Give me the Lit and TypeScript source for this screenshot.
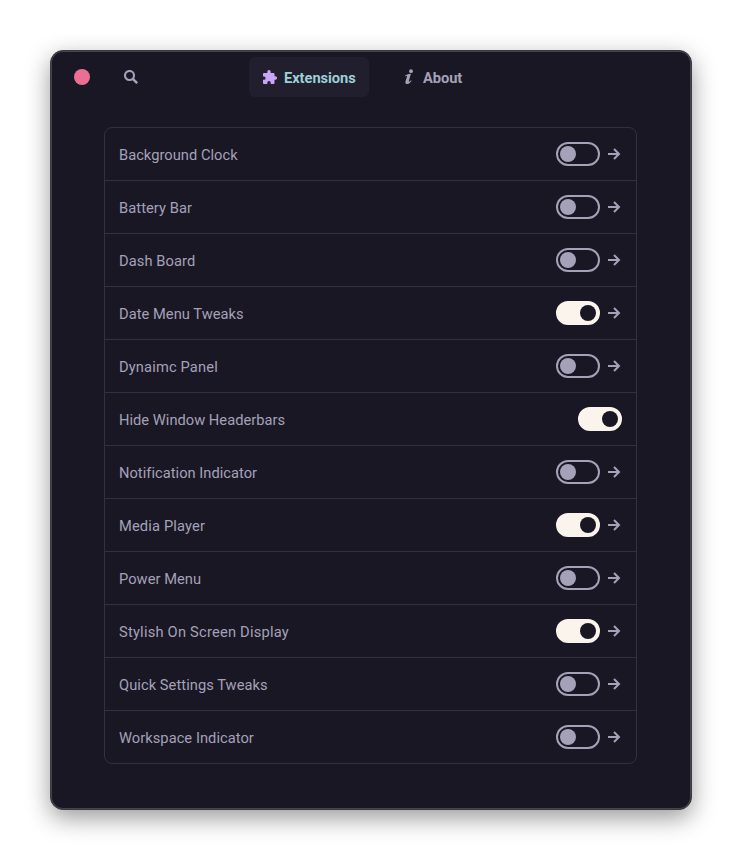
import { LitElement, html, css, svg } from "lit";
import { customElement, property } from "lit/decorators.js";
import { classMap } from "lit/directives/class-map.js";
import { styleMap } from "lit/directives/style-map.js";

interface Extension {
  name: string;
  tracking: number;
  enabled?: boolean;
  noPrefs?: boolean;
}

const EXTENSIONS: Extension[] = [
  { name: "Background Clock", tracking: 0.03 },
  { name: "Battery Bar", tracking: 0.08 },
  { name: "Dash Board", tracking: 0.08 },
  { name: "Date Menu Tweaks", tracking: 0.04, enabled: true },
  { name: "Dynaimc Panel", tracking: 0.15 },
  { name: "Hide Window Headerbars", tracking: 0.02, enabled: true, noPrefs: true },
  { name: "Notification Indicator", tracking: 0.03 },
  { name: "Media Player", tracking: 0.15, enabled: true },
  { name: "Power Menu", tracking: 0.05 },
  { name: "Stylish On Screen Display", tracking: 0.22, enabled: true },
  { name: "Quick Settings Tweaks", tracking: 0.06 },
  { name: "Workspace Indicator", tracking: 0.05 },
];

const icons = {
  search: svg`<circle cx="5.5" cy="5.5" r="4.5" fill="none" stroke="currentColor" stroke-width="2.1"/><path d="M8.8 8.8 13.2 13.2" stroke="currentColor" stroke-width="2.5"/>`,
  puzzle: svg`<path fill="currentColor" d="M5.3 4V2.7a1.7 1.7 0 0 1 3.4 0V4H11.500a1 1 0 0 1 1 1v2.300h.9a1.700 1.700 0 0 1 0 3.400h-.9V14a1 1 0 0 1-1 1H8.700v-1.200a1.700 1.700 0 0 0-3.400 0V15H2a1 1 0 0 1-1-1v-3.200h1a1.600 1.600 0 0 0 0-3.200H1V5a1 1 0 0 1 1-1z"/>`,
  info: svg`<g fill="currentColor"><circle cx="7" cy="2.200" r="1.900"/><path d="M1 7.100C2.200 5.600 3.900 4.900 6.900 4.800L4.900 11.700c-.2.8.1 1.100.5.9.6-.2 1-.7 1.500-1.400l.7.400c-1.100 2.100-2.500 3.500-4.400 3.500-1.600 0-2.200-1.100-1.700-2.600L3 7.500c.2-.6 0-.8-.4-.7-.4.1-.6.4-1 .8z"/></g>`,
  arrow: svg`<path d="M0 6h11M6 1l5 5-5 5" fill="none" stroke="currentColor" stroke-width="2"/>`,
};

@customElement("toggle-switch")
export class ToggleSwitch extends LitElement {
  @property({ type: Boolean }) on = false;

  static styles = css`
    :host {
      display: block;
    }
    .track {
      box-sizing: border-box;
      display: flex;
      align-items: center;
      width: 44px;
      height: 24px;
      padding: 0 2px;
      border: 2px solid #a5a1b8;
      border-radius: 12px;
    }
    .knob {
      width: 16px;
      height: 16px;
      border-radius: 50%;
      background: #a5a1b8;
    }
    .on {
      justify-content: flex-end;
      background: #fbf4ed;
      border-color: #fbf4ed;
    }
    .on .knob {
      background: #191724;
    }
  `;

  render() {
    return html`<div class=${classMap({ track: true, on: this.on })}>
      <div class="knob"></div>
    </div>`;
  }
}

@customElement("app-root")
export class AppRoot extends LitElement {
  static styles = css`
    :host {
      display: block;
      box-sizing: border-box;
      height: 860px;
      padding: 50px;
      background: #fff;
      font-family: Roboto, sans-serif;
      font-size: 14.667px;
      color: #a5a1b8;
    }
    .window {
      box-sizing: border-box;
      width: 642px;
      height: 760px;
      border: 1px solid #3c3c3e;
      border-radius: 13px;
      background: #191724;
      box-shadow: inset 0 0 0 1px #45434e, 0 8px 24px rgba(0, 0, 0, 0.4);
    }
    .header {
      display: grid;
      grid-template-columns: 198px auto 1fr;
      align-items: center;
      height: 52px;
    }
    .left {
      display: flex;
      align-items: center;
      padding-left: 23px;
      gap: 34px;
    }
    .close {
      width: 16px;
      height: 16px;
      border-radius: 50%;
      background: #eb6f92;
    }
    svg {
      display: block;
      flex: none;
    }
    .tabs {
      display: flex;
      gap: 22px;
    }
    .tab {
      box-sizing: border-box;
      display: flex;
      align-items: center;
      height: 40px;
      padding: 0 13px;
      gap: 6px;
      border-radius: 6px;
      font-weight: 700;
      letter-spacing: -0.05px;
    }
    .tab span {
      padding-top: 2px;
    }
    .extensions {
      width: 120px;
      background: #211e2e;
      color: #9ccfd8;
    }
    .extensions svg {
      color: #caa5f5;
    }
    .list {
      box-sizing: border-box;
      width: 533px;
      margin: 24px 0 0 53px;
      border: 1px solid #33313e;
      border-radius: 8px;
    }
    .row {
      display: flex;
      align-items: center;
      height: 52px;
      padding: 0 14px;
    }
    .row + .row {
      border-top: 1px solid #33313e;
    }
    .name {
      flex: 1;
      padding-top: 2px;
    }
    .arrow {
      width: 14px;
      margin-left: 8px;
    }
  `;

  private renderRow(ext: Extension) {
    return html`<div class="row">
      <span class="name" style=${styleMap({ letterSpacing: `${ext.tracking}px` })}>${ext.name}</span>
      <toggle-switch ?on=${ext.enabled}></toggle-switch>
      ${ext.noPrefs
        ? null
        : html`<div class="arrow">
            <svg width="13" height="12" viewBox="0 0 13 12">${icons.arrow}</svg>
          </div>`}
    </div>`;
  }

  render() {
    return html`<div class="window">
      <div class="header">
        <div class="left">
          <div class="close"></div>
          <svg width="14" height="14" viewBox="0 0 14 14">${icons.search}</svg>
        </div>
        <div class="tabs">
          <div class="tab extensions">
            <svg width="16" height="16" viewBox="0 0 16 16">${icons.puzzle}</svg>
            <span>Extensions</span>
          </div>
          <div class="tab">
            <svg width="13" height="16" viewBox="0 0 13 16">${icons.info}</svg>
            <span>About</span>
          </div>
        </div>
      </div>
      <div class="list">${EXTENSIONS.map((e) => this.renderRow(e))}</div>
    </div>`;
  }
}
